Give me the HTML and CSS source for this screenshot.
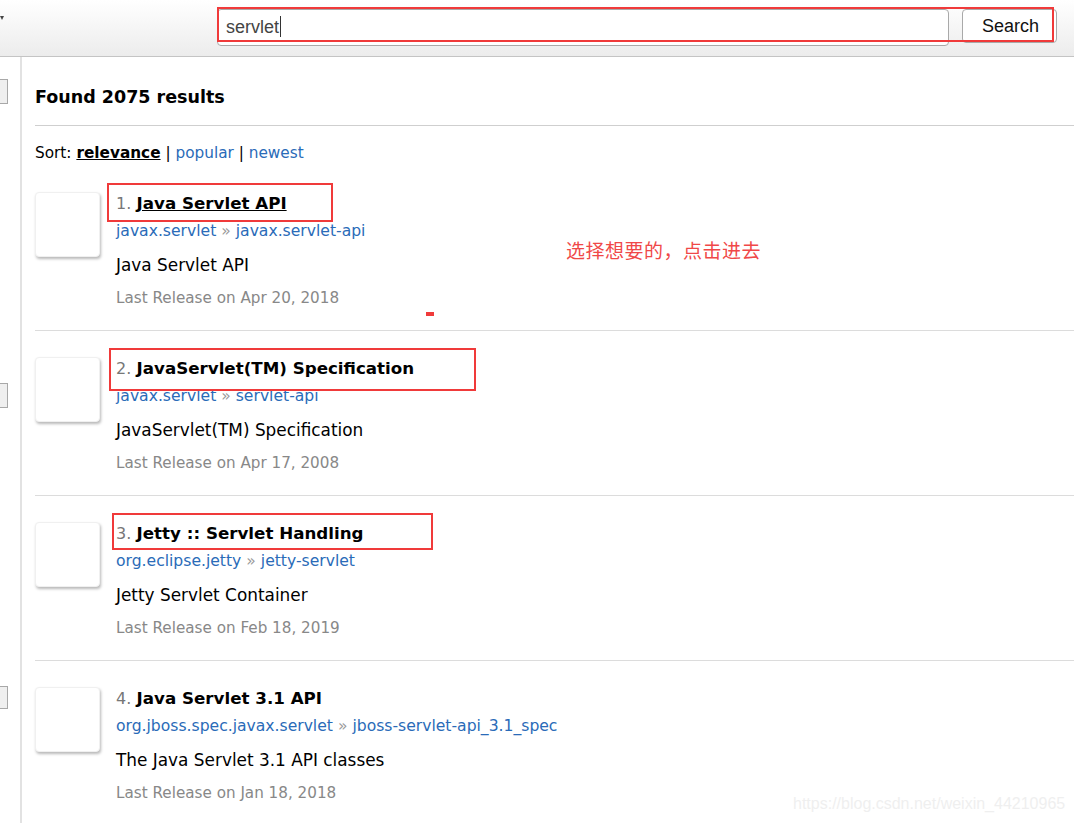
FILE: index.html
```html
<!DOCTYPE html>
<html lang="en">
<head>
<meta charset="utf-8">
<title>Search results</title>
<link rel="stylesheet" href="styles.css">
</head>
<body>
<header class="topbar">
  <span class="caret-tri"></span>
  <form class="search">
    <div class="search-input">servlet<span class="cursor"></span></div>
    <button type="button" class="search-btn">Search</button>
  </form>
</header>
<div class="page">
  <aside class="sidebar">
    <span class="side-box b1"></span>
    <span class="side-box b2"></span>
    <span class="side-box b3"></span>
  </aside>
  <main class="main">
    <h2 class="found">Found 2075 results</h2>
    <div class="sort">Sort: <a class="cur">relevance</a> | <a>popular</a> | <a>newest</a></div>

    <div class="item">
      <div class="thumb"></div>
      <div class="info">
        <div class="title"><span class="num">1.</span> <a class="tlink ul">Java Servlet API</a></div>
        <div class="coords"><a>javax.servlet</a> <span class="sep">»</span> <a>javax.servlet-api</a></div>
        <div class="desc">Java Servlet API</div>
        <div class="rel">Last Release on Apr 20, 2018</div>
      </div>
    </div>

    <div class="item">
      <div class="thumb"></div>
      <div class="info">
        <div class="title"><span class="num">2.</span> <a class="tlink">JavaServlet(TM) Specification</a></div>
        <div class="coords"><a>javax.servlet</a> <span class="sep">»</span> <a>servlet-api</a></div>
        <div class="desc">JavaServlet(TM) Specification</div>
        <div class="rel">Last Release on Apr 17, 2008</div>
      </div>
    </div>

    <div class="item">
      <div class="thumb"></div>
      <div class="info">
        <div class="title"><span class="num">3.</span> <a class="tlink">Jetty :: Servlet Handling</a></div>
        <div class="coords"><a>org.eclipse.jetty</a> <span class="sep">»</span> <a>jetty-servlet</a></div>
        <div class="desc">Jetty Servlet Container</div>
        <div class="rel">Last Release on Feb 18, 2019</div>
      </div>
    </div>

    <div class="item">
      <div class="thumb"></div>
      <div class="info">
        <div class="title"><span class="num">4.</span> <a class="tlink">Java Servlet 3.1 API</a></div>
        <div class="coords"><a>org.jboss.spec.javax.servlet</a> <span class="sep">»</span> <a>jboss-servlet-api_3.1_spec</a></div>
        <div class="desc">The Java Servlet 3.1 API classes</div>
        <div class="rel">Last Release on Jan 18, 2018</div>
      </div>
    </div>
  </main>
</div>

<div class="mark m-search"></div>
<div class="mark m-1"></div>
<div class="mark m-2"></div>
<div class="mark m-3"></div>
<div class="mark-dash"></div>
<div class="note">选择想要的，点击进去</div>
<div class="watermark">https://blog.csdn.net/weixin_44210965</div>
</body>
</html>
```
FILE: styles.css
```css
* { box-sizing: border-box; }
html, body { margin: 0; padding: 0; }
body {
  width: 1074px;
  height: 823px;
  overflow: hidden;
  background: #fff;
  font-family: "DejaVu Sans", Verdana, sans-serif;
  color: #000;
  position: relative;
}

.topbar {
  height: 57px;
  display: flex;
  align-items: flex-start;
  background: linear-gradient(#ffffff, #ececec);
  border-bottom: 1px solid #c4c4c4;
}
.caret-tri {
  width: 0;
  height: 0;
  margin-top: 16px;
  border-left: 2px solid transparent;
  border-right: 2px solid transparent;
  border-top: 4px solid #444;
}
.search {
  display: flex;
  align-items: flex-start;
  margin-left: 213px;
  margin-top: 9px;
  gap: 13px;
}
.search-input {
  width: 732px;
  height: 37px;
  background: #fff;
  border: 1px solid #a9a9a9;
  border-radius: 4px;
  padding: 0 8px 2px;
  font-family: "Liberation Sans", Arial, sans-serif;
  font-size: 18px;
  line-height: 24px;
  color: #444;
  display: flex;
  align-items: center;
}
.cursor {
  display: inline-block;
  width: 1px;
  height: 21px;
  background: #333;
  margin-left: 1px;
}
.search-btn {
  width: 95px;
  height: 34px;
  background: #fff;
  border: 1px solid #a9a9a9;
  border-radius: 4px;
  font-family: "Liberation Sans", Arial, sans-serif;
  font-size: 18px;
  color: #111;
  padding: 1px 0 0 2px;
}

.page {
  display: flex;
}
.sidebar {
  width: 22px;
  flex: none;
  border-right: 2px solid #e2e2e2;
  min-height: 766px;
  display: flex;
  flex-direction: column;
}
.side-box {
  display: block;
  width: 8px;
  height: 25px;
  background: #efefef;
  border: 1px solid #a8a8a8;
  border-left: none;
}
.b1 { margin-top: 22px; }
.b2 { margin-top: 279px; }
.b3 { margin-top: 278px; height: 23px; }

.main {
  flex: 1;
  padding-left: 13px;
  padding-top: 29px;
}
.found {
  margin: 0;
  font-size: 17.5px;
  line-height: 23px;
  font-weight: bold;
  padding-bottom: 16px;
  border-bottom: 1px solid #cfcfcf;
}
.sort {
  margin-top: 17px;
  font-size: 15.3px;
  line-height: 20px;
  color: #000;
}
.sort a { color: #2a6bb8; }
.sort a.cur { color: #000; font-weight: bold; text-decoration: underline; }

.item {
  display: flex;
  align-items: flex-start;
  padding-top: 25px;
  padding-bottom: 22px;
  border-bottom: 1px solid #dcdcdc;
  height: 165px;
}
.main .sort + .item { margin-top: 3px; }
.item:last-child { border-bottom: none; }

.thumb {
  width: 65px;
  height: 65px;
  flex: none;
  margin-top: 1px;
  background: #fff;
  border: 1px solid #f0f0f0;
  border-radius: 4px;
  box-shadow: 1px 2px 3px rgba(0, 0, 0, 0.28);
}
.info {
  margin-left: 16px;
}
.title {
  font-size: 16.7px;
  line-height: 24px;
  white-space: nowrap;
}
.num { color: #777; font-weight: normal; font-size: 16px; }
.tlink { font-weight: bold; color: #000; }
.tlink.ul { text-decoration: underline; }
.coords {
  margin-top: 5px;
  font-size: 15.6px;
  line-height: 20px;
  white-space: nowrap;
}
.coords a { color: #2a6bb8; }
.sep { color: #999; }
.desc {
  margin-top: 13px;
  font-size: 16.9px;
  line-height: 22px;
  white-space: nowrap;
}
.rel {
  margin-top: 12px;
  font-size: 15.2px;
  line-height: 20px;
  color: #888;
  white-space: nowrap;
}

/* screenshot annotations (overlays) */
.mark {
  position: absolute;
  border: 2px solid #f03a3a;
}
.m-search { left: 217px; top: 7px; width: 837px; height: 35px; }
.m-1 { left: 107px; top: 183px; width: 226px; height: 39px; }
.m-2 { left: 109px; top: 348px; width: 367px; height: 43px; }
.m-3 { left: 112px; top: 513px; width: 321px; height: 37px; }
.mark-dash {
  position: absolute;
  left: 426px;
  top: 312px;
  width: 8px;
  height: 4px;
  background: #f03a3a;
}
.note {
  position: absolute;
  left: 566px;
  top: 238px;
  font-family: "Noto Sans CJK SC", sans-serif;
  font-size: 19px;
  line-height: 24px;
  color: #f04848;
  letter-spacing: 0.5px;
}
.watermark {
  position: absolute;
  left: 793px;
  top: 794px;
  font-family: "Liberation Sans", Arial, sans-serif;
  font-size: 16px;
  line-height: 20px;
  color: #efefef;
}
```
